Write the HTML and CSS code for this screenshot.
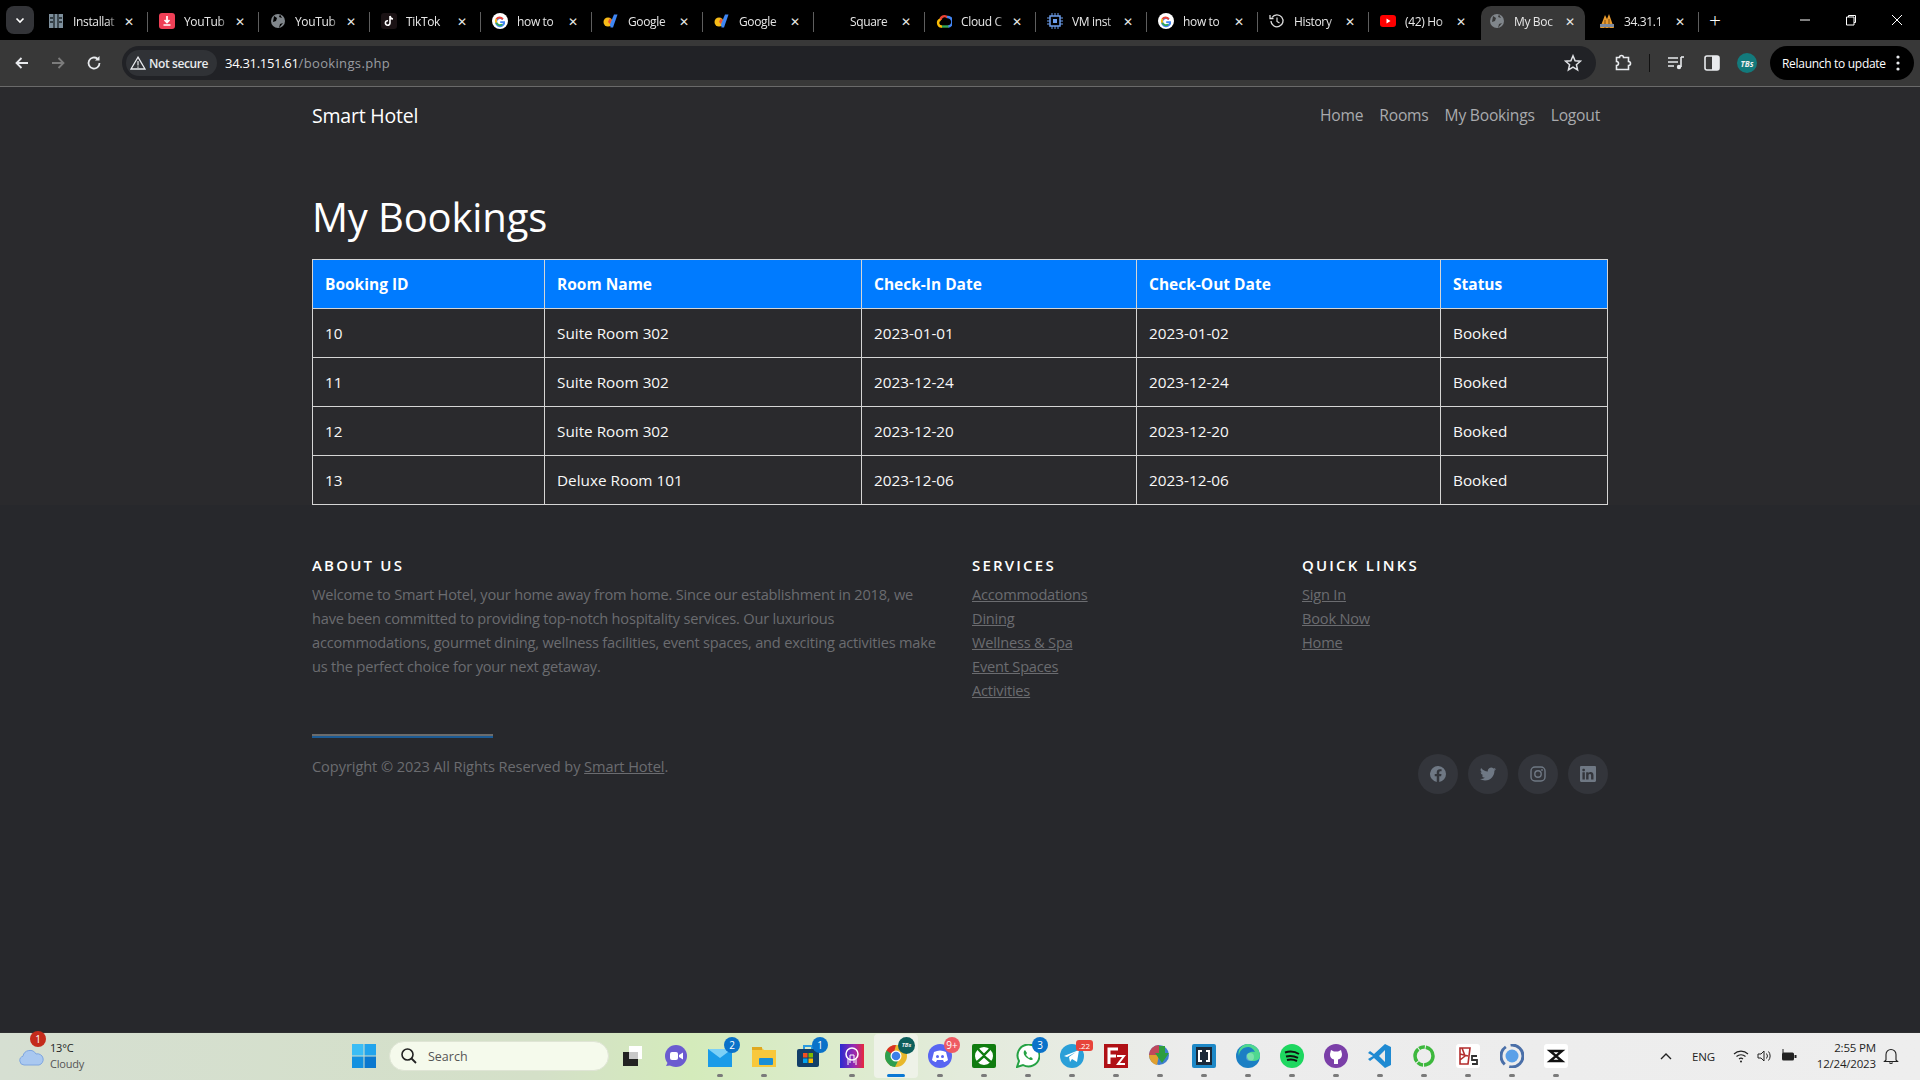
FILE: index.html
```html
<!DOCTYPE html>
<html lang="en">
<head>
<meta charset="utf-8">
<title>My Bookings</title>
<link rel="stylesheet" href="styles.css">
</head>
<body>
<div class="screen">
  <div class="tabstrip">
    <div class="tab-menu"><svg width="12" height="12" viewBox="0 0 12 12"><path d="M2.5 4.5 6 8l3.5-3.5" fill="none" stroke="#fff" stroke-width="1.6"/></svg></div>
    <div class="tabs">
      <div class="tab"><svg class="fav" viewBox="0 0 16 16"><rect x="1" y="1" width="14" height="14" fill="#7d8f9c"/><path d="M6 1v14M10 1v14M2 5h3M2 9h3M11 5h3M11 9h3" stroke="#1d2428" stroke-width="1.3"/></svg><span class="tab-title">Installat</span><span class="tab-x">✕</span></div>
      <div class="tab"><svg class="fav" viewBox="0 0 16 16"><rect width="16" height="16" rx="3" fill="#ef3f56"/><path d="M8 3v6M5.5 7 8 9.5 10.500 7M4.500 12h7" stroke="#fff" stroke-width="1.700" fill="none"/></svg><span class="tab-title">YouTub</span><span class="tab-x">✕</span></div>
      <div class="tab"><svg class="fav" viewBox="0 0 16 16"><circle cx="8" cy="8" r="7" fill="#80868b"/><path d="M4 3l3 2-1 3-3 1M9 15l1-4 3-1M10 1.500 9 4l3 1" fill="#000"/></svg><span class="tab-title">YouTub</span><span class="tab-x">✕</span></div>
      <div class="tab"><svg class="fav" viewBox="0 0 16 16"><rect width="16" height="16" rx="3" fill="#1a1214"/><path d="M9 3v7a2.300 2.300 0 1 1-2-2.300M9 3c.3 1.800 1.300 2.800 3 3" fill="none" stroke="#fff" stroke-width="1.600"/></svg><span class="tab-title">TikTok</span><span class="tab-x">✕</span></div>
      <div class="tab"><svg class="fav" viewBox="0 0 16 16"><use href="#google"/></svg><span class="tab-title">how to</span><span class="tab-x">✕</span></div>
      <div class="tab"><svg class="fav" viewBox="0 0 16 16"><use href="#gemini"/></svg><span class="tab-title">Google</span><span class="tab-x">✕</span></div>
      <div class="tab"><svg class="fav" viewBox="0 0 16 16"><use href="#gemini"/></svg><span class="tab-title">Google</span><span class="tab-x">✕</span></div>
      <div class="tab"><span class="fav"></span><span class="tab-title">Square</span><span class="tab-x">✕</span></div>
      <div class="tab"><svg class="fav" viewBox="0 0 16 16"><path d="M4.500 7a4 4 0 0 1 7-2.500" fill="none" stroke="#ea4335" stroke-width="2.400"/><path d="M11 4A3.800 3.800 0 0 1 12 13.500" fill="none" stroke="#4285f4" stroke-width="2.400"/><path d="M12.500 13.500H5.500" stroke="#34a853" stroke-width="2.400"/><path d="M6 13.500a3.500 3.500 0 0 1-1.500-6.800" fill="none" stroke="#fbbc05" stroke-width="2.400"/></svg><span class="tab-title">Cloud C</span><span class="tab-x">✕</span></div>
      <div class="tab"><svg class="fav" viewBox="0 0 16 16"><rect x="3" y="3" width="10" height="10" fill="none" stroke="#6d9eeb" stroke-width="1.500"/><rect x="6" y="6" width="4" height="4" fill="#6d9eeb"/><path d="M5 0v3M8 0v3M11 0v3M5 13v3M8 13v3M11 13v3M0 5h3M0 8h3M0 11h3M13 5h3M13 8h3M13 11h3" stroke="#6d9eeb"/></svg><span class="tab-title">VM inst</span><span class="tab-x">✕</span></div>
      <div class="tab"><svg class="fav" viewBox="0 0 16 16"><use href="#google"/></svg><span class="tab-title">how to</span><span class="tab-x">✕</span></div>
      <div class="tab"><svg class="fav" viewBox="0 0 16 16"><path d="M3 4.500A6 6 0 1 1 2 8" fill="none" stroke="#ddd" stroke-width="1.300"/><path d="M1 2v3.500h3.500" fill="none" stroke="#ddd" stroke-width="1.300"/><path d="M8 4.500V8.500l2.500 1.500" fill="none" stroke="#ddd" stroke-width="1.200"/></svg><span class="tab-title">History</span><span class="tab-x">✕</span></div>
      <div class="tab tab-last-before"><svg class="fav" viewBox="0 0 16 16"><rect y="2" width="16" height="12" rx="3" fill="#f00"/><path d="M6.500 5.500v5L10.500 8z" fill="#fff"/></svg><span class="tab-title">(42) Ho</span><span class="tab-x">✕</span></div>
      <div class="tab tab-active"><svg class="fav" viewBox="0 0 16 16"><circle cx="8" cy="8" r="7" fill="#80868b"/><path d="M4 3l3 2-1 3-3 1M9 15l1-4 3-1M10 1.500 9 4l3 1" fill="#383838"/></svg><span class="tab-title">My Boc</span><span class="tab-x">✕</span></div>
      <div class="tab"><svg class="fav" viewBox="0 0 16 16"><path d="M1 15 6 2l2 4 2-5 5 14z" fill="#e89a2e"/><path d="M6 15V7M10 15V6" stroke="#7a4a10"/><rect x="1" y="11" width="14" height="3" fill="#7b8aa0"/></svg><span class="tab-title">34.31.1</span><span class="tab-x">✕</span></div>
      <div class="tab-plus">+</div>
    </div>
    <div class="window-controls">
      <svg width="12" height="12" viewBox="0 0 12 12"><path d="M1 6h10" stroke="#fff"/></svg>
      <svg width="12" height="12" viewBox="0 0 12 12"><path d="M3.500 3V1.500h7v7H9M1.500 3h7.500v8h-7.500z" fill="none" stroke="#fff"/></svg>
      <svg width="12" height="12" viewBox="0 0 12 12"><path d="M1 1l10 10M11 1 1 11" stroke="#fff"/></svg>
    </div>
  </div>
  <div class="toolbar">
    <div class="nav-icons">
      <svg width="16" height="16" viewBox="0 0 16 16"><path d="M14 8H3M7.500 3 2.500 8l5 5" fill="none" stroke="#e8eaed" stroke-width="1.800"/></svg>
      <svg width="16" height="16" viewBox="0 0 16 16"><path d="M2 8h11M8.500 3l5 5-5 5" fill="none" stroke="#7c7c7c" stroke-width="1.800"/></svg>
      <svg width="16" height="16" viewBox="0 0 16 16"><path d="M13.500 8A5.500 5.500 0 1 1 11.500 3.800" fill="none" stroke="#e8eaed" stroke-width="1.800"/><path d="M13.500 1v4.500H9z" fill="#e8eaed"/></svg>
    </div>
    <div class="omnibox">
      <div class="secure-chip"><svg width="16" height="14" viewBox="0 0 16 14"><path d="M8 1.200 15 13H1z" fill="none" stroke="#e8eaed" stroke-width="1.300"/><path d="M8 5v4.500M8 10.500v1.300" stroke="#e8eaed" stroke-width="1.200"/></svg><span>Not secure</span></div>
      <div class="url"><span class="url-host">34.31.151.61</span><span class="url-path">/bookings.php</span></div>
      <svg class="star" width="18" height="18" viewBox="0 0 18 18"><path d="M9 1.800 11.100 6.700 16.400 7.200 12.400 10.700 13.600 15.900 9 13.200 4.400 15.900 5.600 10.700 1.600 7.200 6.900 6.700z" fill="none" stroke="#dfe1e5" stroke-width="1.500"/></svg>
    </div>
    <div class="tool-icons">
      <svg width="18" height="18" viewBox="0 0 18 18"><path d="M2.500 3.500h3a2 2 0 0 1 4 0h5v4a2 2 0 0 1 0 4v4h-12v-4a2 2 0 0 0 0-4z" fill="none" stroke="#e8eaed" stroke-width="1.600"/></svg>
      <span class="tool-sep"></span>
      <svg width="18" height="18" viewBox="0 0 18 18"><path d="M1 4h10M1 8h10M1 12h6" stroke="#e8eaed" stroke-width="1.600"/><path d="M14 3v10" stroke="#e8eaed" stroke-width="1.600"/><circle cx="12" cy="13" r="2.200" fill="#e8eaed"/><path d="M14 3h3" stroke="#e8eaed" stroke-width="1.600"/></svg>
      <svg width="18" height="18" viewBox="0 0 18 18"><rect x="2" y="2" width="14" height="14" rx="2" fill="none" stroke="#e8eaed" stroke-width="1.600"/><rect x="9" y="2" width="7" height="14" fill="#e8eaed"/></svg>
      <div class="avatar">TBs</div>
    </div>
    <div class="relaunch"><span>Relaunch to update</span><svg width="4" height="16" viewBox="0 0 4 16"><circle cx="2" cy="2" r="1.600" fill="#e8eaed"/><circle cx="2" cy="8" r="1.600" fill="#e8eaed"/><circle cx="2" cy="14" r="1.600" fill="#e8eaed"/></svg></div>
  </div>

  <div class="page">
    <div class="upper">
      <nav class="site-nav">
        <a class="brand" href="#">Smart Hotel</a>
        <ul class="nav-links">
          <li><a href="#">Home</a></li>
          <li><a href="#">Rooms</a></li>
          <li><a href="#">My Bookings</a></li>
          <li><a href="#">Logout</a></li>
        </ul>
      </nav>
      <main class="content">
        <h1 class="page-title">My Bookings</h1>
        <table class="bookings">
          <thead>
            <tr><th class="c1">Booking ID</th><th class="c2">Room Name</th><th class="c3">Check-In Date</th><th class="c4">Check-Out Date</th><th class="c5">Status</th></tr>
          </thead>
          <tbody>
            <tr><td>10</td><td>Suite Room 302</td><td>2023-01-01</td><td>2023-01-02</td><td>Booked</td></tr>
            <tr><td>11</td><td>Suite Room 302</td><td>2023-12-24</td><td>2023-12-24</td><td>Booked</td></tr>
            <tr><td>12</td><td>Suite Room 302</td><td>2023-12-20</td><td>2023-12-20</td><td>Booked</td></tr>
            <tr><td>13</td><td>Deluxe Room 101</td><td>2023-12-06</td><td>2023-12-06</td><td>Booked</td></tr>
          </tbody>
        </table>
      </main>
    </div>
    <footer class="site-footer">
      <div class="footer-inner">
        <div class="footer-cols">
          <section class="fcol-about">
            <h6 class="footer-head">About Us</h6>
            <p class="footer-text">Welcome to Smart Hotel, your home away from home. Since our establishment in 2018, we have been committed to providing top-notch hospitality services. Our luxurious accommodations, gourmet dining, wellness facilities, event spaces, and exciting activities make us the perfect choice for your next getaway.</p>
          </section>
          <section class="fcol">
            <h6 class="footer-head">Services</h6>
            <ul class="footer-links">
              <li><a href="#">Accommodations</a></li>
              <li><a href="#">Dining</a></li>
              <li><a href="#">Wellness &amp; Spa</a></li>
              <li><a href="#">Event Spaces</a></li>
              <li><a href="#">Activities</a></li>
            </ul>
          </section>
          <section class="fcol">
            <h6 class="footer-head">Quick Links</h6>
            <ul class="footer-links">
              <li><a href="#">Sign In</a></li>
              <li><a href="#">Book Now</a></li>
              <li><a href="#">Home</a></li>
            </ul>
          </section>
        </div>
        <hr class="footer-rule">
        <div class="footer-bottom">
          <p class="copyright">Copyright © 2023 All Rights Reserved by <a href="#">Smart Hotel</a>.</p>
          <div class="socials">
            <a class="social" href="#"><svg width="16" height="16" viewBox="0 0 16 16"><path d="M16 8a8 8 0 1 0-9.250 7.900v-5.590H4.720V8h2.030V6.240c0-2 1.190-3.110 3.020-3.110.87 0 1.790.15 1.790.15v1.970h-1.010c-.99 0-1.300.62-1.300 1.250V8h2.220l-.35 2.310H9.250v5.590A8 8 0 0 0 16 8z"/></svg></a>
            <a class="social" href="#"><svg width="16" height="16" viewBox="0 0 16 16"><path d="M5.030 14.500c6.040 0 9.340-5 9.340-9.340 0-.14 0-.28-.01-.42A6.700 6.700 0 0 0 16 3.040a6.500 6.500 0 0 1-1.890.52 3.300 3.300 0 0 0 1.450-1.820 6.600 6.600 0 0 1-2.090.8A3.290 3.290 0 0 0 7.880 5.530 9.320 9.320 0 0 1 1.110 2.100a3.290 3.290 0 0 0 1.020 4.380A3.300 3.300 0 0 1 .64 6.080v.04a3.290 3.290 0 0 0 2.630 3.220 3.300 3.300 0 0 1-1.480.06 3.290 3.290 0 0 0 3.070 2.280A6.600 6.600 0 0 1 0 13.040a9.300 9.300 0 0 0 5.030 1.460z"/></svg></a>
            <a class="social" href="#"><svg width="16" height="16" viewBox="0 0 16 16"><rect x="1" y="1" width="14" height="14" rx="4" fill="none" stroke="currentColor" stroke-width="1.400"/><circle cx="8" cy="8" r="3.200" fill="none" stroke="currentColor" stroke-width="1.400"/><circle cx="12" cy="4" r=".9"/></svg></a>
            <a class="social" href="#"><svg width="16" height="16" viewBox="0 0 16 16"><path d="M0 1.150C0 .52.520 0 1.170 0h13.660C15.480 0 16 .52 16 1.150v13.700c0 .63-.52 1.150-1.170 1.150H1.170C.52 16 0 15.480 0 14.850zM4.830 13.400V6.180h-2.400v7.220zM3.630 5.200c.84 0 1.360-.55 1.360-1.250-.02-.71-.52-1.250-1.340-1.250-.82 0-1.360.54-1.360 1.250 0 .7.520 1.250 1.320 1.250zM8.550 13.400V9.370c0-.22.020-.43.080-.59.170-.43.570-.88 1.230-.88.870 0 1.220.66 1.220 1.630v3.870h2.400V9.260c0-2.220-1.180-3.250-2.760-3.250-1.280 0-1.850.7-2.170 1.190V6.180h-2.400c.03.680 0 7.220 0 7.220z"/></svg></a>
          </div>
        </div>
      </div>
    </footer>
  </div>

  <div class="taskbar">
    <div class="weather">
      <svg class="weather-icon" width="26" height="20" viewBox="0 0 26 20"><path d="M5 19a4.500 4.500 0 0 1-1-8.800A7 7 0 0 1 17 8a5.500 5.500 0 0 1 3 11z" fill="#a9c8f0" stroke="#7ea6e0"/></svg>
      <span class="weather-badge">1</span>
      <div class="weather-text"><span>13°C</span><span class="weather-sub">Cloudy</span></div>
    </div>
    <div class="task-center">
      <svg class="task-icon" width="24" height="24" viewBox="0 0 24 24"><rect width="11.500" height="11.500" fill="#3cbdf5"/><rect x="12.500" width="11.500" height="11.500" fill="#22a4ec"/><rect y="12.500" width="11.500" height="11.500" fill="#1391e0"/><rect x="12.500" y="12.500" width="11.500" height="11.500" fill="#0a78cf"/></svg>
      <div class="search"><svg width="18" height="18" viewBox="0 0 18 18"><circle cx="7.500" cy="7.500" r="5.500" fill="none" stroke="#222" stroke-width="1.600"/><path d="M11.500 11.500 16 16" stroke="#222" stroke-width="1.800"/></svg><span>Search</span></div>
      <span class="ti"><svg viewBox="0 0 24 24"><rect x="3" y="8" width="15" height="14" fill="#222"/><rect x="9" y="2" width="13" height="13" fill="#fff"/><rect x="9" y="8" width="9" height="7" fill="#c8c8c8"/></svg></span>
      <span class="ti"><svg viewBox="0 0 24 24"><circle cx="12" cy="12" r="11" fill="#6b5bd0"/><path d="M2 22l3-6 5 5z" fill="#6b5bd0"/><rect x="6" y="8" width="8" height="8" rx="2" fill="#fff"/><path d="M15 11l4-2.500v7L15 13z" fill="#fff"/></svg></span>
      <span class="ti"><svg viewBox="0 0 24 24"><rect x="0" y="5" width="24" height="18" fill="#1a9be8"/><path d="M0 5l12 9 12-9" fill="#7cd0f7"/></svg><b class="badge">2</b></span>
      <span class="ti"><svg viewBox="0 0 24 24"><path d="M0 3h9l3 3h12v17H0z" fill="#f8c83c"/><rect x="7" y="14" width="14" height="7" rx="1" fill="#1a8fd6"/><rect y="3" width="10" height="3" fill="#e0a820"/></svg></span>
      <span class="ti"><svg viewBox="0 0 24 24"><rect x="1" y="5" width="22" height="18" rx="2" fill="#123f69"/><path d="M8 5V2h8v3" fill="none" stroke="#2c9be0" stroke-width="2"/><rect x="7" y="9" width="4.500" height="4.500" fill="#f25022"/><rect x="12.500" y="9" width="4.500" height="4.500" fill="#7fba00"/><rect x="7" y="14.500" width="4.500" height="4.500" fill="#00a4ef"/><rect x="12.500" y="14.500" width="4.500" height="4.500" fill="#ffb900"/></svg><b class="badge">1</b></span>
      <span class="ti"><svg viewBox="0 0 24 24"><defs><linearGradient id="pg" x1="0" x2="1"><stop offset="0" stop-color="#2a2ad0"/><stop offset=".6" stop-color="#9a2ab0"/><stop offset="1" stop-color="#e8283c"/></linearGradient></defs><rect width="24" height="24" fill="url(#pg)"/><circle cx="12" cy="10" r="6" fill="none" stroke="#fff" stroke-width="1.500"/><path d="M8 21v-6M16 21v-6M10 19V11h4v8" fill="none" stroke="#fff"/></svg></span>
      <span class="ti ti-active"><svg viewBox="0 0 24 24"><circle cx="12" cy="12" r="11" fill="#e8b82c"/><path d="M12 1a11 11 0 0 0-9.500 5.500L8 15z" fill="#d93025"/><path d="M2.500 6.500A11 11 0 0 0 11 23l4-8z" fill="#2e9e4f"/><circle cx="12" cy="12" r="5.500" fill="#fff"/><circle cx="12" cy="12" r="4.300" fill="#3d7fe8"/></svg><span class="profile-badge">TBs</span></span>
      <span class="ti"><svg viewBox="0 0 24 24"><circle cx="12" cy="12" r="12" fill="#5865f2"/><path d="M6 8c4-2 8-2 12 0l2 8c-2 1.500-3 2-4 2l-1-2H9l-1 2c-1 0-2-.5-4-2z" fill="#fff"/><circle cx="9.500" cy="12.500" r="1.500" fill="#5865f2"/><circle cx="14.500" cy="12.500" r="1.500" fill="#5865f2"/></svg><b class="badge badge-red">9+</b></span>
      <span class="ti"><svg viewBox="0 0 24 24"><rect width="24" height="24" rx="2" fill="#107c10"/><circle cx="12" cy="12" r="9" fill="#fff"/><path d="M5 4l7 7 7-7M3 20l9-8 9 8" fill="none" stroke="#107c10" stroke-width="2.400"/></svg></span>
      <span class="ti"><svg viewBox="0 0 24 24"><path d="M1 23l2-6A11 11 0 1 1 7 21z" fill="#fff" stroke="#25a244" stroke-width="2"/><path d="M8 7c-1 2 0 5 3 7s5 3 6 1l-2-2-2 1-3-3 1-2-2-3z" fill="#25a244"/></svg><b class="badge">3</b></span>
      <span class="ti"><svg viewBox="0 0 24 24"><circle cx="12" cy="12" r="12" fill="#2a9fd8"/><path d="M4 12 19 6l-2 12-5-3-2 3-1-5 7-5-9 5z" fill="#fff"/></svg><b class="badge badge-rect">.22</b></span>
      <span class="ti"><svg viewBox="0 0 24 24"><rect width="24" height="24" fill="#b01116"/><path d="M5 20V5h9M5 12h7" fill="none" stroke="#fff" stroke-width="3"/><path d="M13 12h7l-6 8h7" fill="none" stroke="#fff" stroke-width="2"/></svg></span>
      <span class="ti"><svg viewBox="0 0 24 24"><circle cx="11" cy="11" r="10" fill="#3f7fd0"/><path d="M1 11a10 10 0 0 1 10-10v10z" fill="#c0485c"/><path d="M1 11a10 10 0 0 0 8 10l2-10z" fill="#e0a030"/><path d="M11 2h6v7h4l-7 10-7-10h4z" fill="#2e9e3f"/></svg></span>
      <span class="ti"><svg viewBox="0 0 24 24"><rect width="24" height="24" rx="2" fill="#1e88c7"/><rect x="4" y="3" width="16" height="18" fill="#1b2a3a"/><path d="M10 7H7v10h3M14 7h3v10h-3" fill="none" stroke="#fff" stroke-width="2"/></svg></span>
      <span class="ti"><svg viewBox="0 0 24 24"><circle cx="12" cy="12" r="12" fill="#1b7fc4"/><path d="M12 0a12 12 0 0 1 12 12c0 4-4 5-7 5-5 0-6-3-6-5 0-3 4-5 8-4C17 4 14 3 12 3 7 3 3 7 3 12 1 6 6 0 12 0z" fill="#4fd88f"/><circle cx="14" cy="13" r="4" fill="#fff" opacity=".25"/></svg></span>
      <span class="ti"><svg viewBox="0 0 24 24"><circle cx="12" cy="12" r="12" fill="#1ed760"/><path d="M5 8.500c5-1.500 10-1 14 1.500M6 12.500c4-1 8-.6 12 1.400M7 16c3-.8 7-.5 10 1" fill="none" stroke="#111" stroke-width="2"/></svg></span>
      <span class="ti"><svg viewBox="0 0 24 24"><circle cx="12" cy="12" r="12" fill="#7b3fa8"/><path d="M6 10l1-4 3 1.500h4L17 6l1 4c0 4-2 5-4 5.500V20h-4v-4.500C8 15 6 14 6 10z" fill="#fff"/></svg></span>
      <span class="ti"><svg viewBox="0 0 24 24"><path d="M17 0l6 3v18l-6 3L6 14l-4 3-2-2 5-3-5-3 2-2 4 3z" fill="#1f8ad2"/><path d="M17 6v12l-6-6z" fill="#e9e9e9"/></svg></span>
      <span class="ti"><svg viewBox="0 0 24 24"><circle cx="12" cy="12" r="9" fill="none" stroke="#3db83d" stroke-width="3.500" stroke-dasharray="14 1 6 1"/></svg></span>
      <span class="ti"><svg viewBox="0 0 24 24"><rect width="24" height="24" rx="3" fill="#fff"/><path d="M4 4h10l-2 16H4zM4 10l8 2M6 4l3 8-5 4" fill="none" stroke="#b32d2d" stroke-width="1.600"/><path d="M21 12h-5v4h5v4h-5" fill="none" stroke="#333" stroke-width="1.800"/></svg></span>
      <span class="ti"><svg viewBox="0 0 24 24"><circle cx="12" cy="12" r="11" fill="none" stroke="#4a6fa8" stroke-width="3" stroke-dasharray="20 5"/><circle cx="12" cy="12" r="6.500" fill="#5aa0e8"/></svg></span>
      <span class="ti"><svg viewBox="0 0 24 24"><rect width="24" height="24" rx="3" fill="#fff"/><path d="M6 7h12l-12 10h12z" fill="none" stroke="#111" stroke-width="2.400"/></svg></span>
    </div>
    <div class="tray">
      <svg width="12" height="8" viewBox="0 0 12 8"><path d="M1 7l5-5 5 5" fill="none" stroke="#222" stroke-width="1.400"/></svg>
      <span class="lang">ENG</span>
      <svg class="tray-icon" width="16" height="14" viewBox="0 0 16 14"><path d="M1 5a10 10 0 0 1 14 0M3.500 7.500a6.500 6.500 0 0 1 9 0M6 10a3 3 0 0 1 4 0" fill="none" stroke="#222" stroke-width="1.100"/><circle cx="8" cy="12.500" r="1" fill="#222"/></svg>
      <svg class="tray-icon" width="16" height="14" viewBox="0 0 16 14"><path d="M1 5h3l3-3v10L4 9H1z" fill="none" stroke="#222"/><path d="M9.500 4.500a4 4 0 0 1 0 5M11.500 2.500a7 7 0 0 1 0 9" fill="none" stroke="#222"/></svg>
      <svg class="tray-icon" width="16" height="14" viewBox="0 0 16 14"><rect x="1" y="3.500" width="12" height="8" rx="1.500" fill="#222"/><rect x="13.500" y="6" width="2" height="3" fill="#222"/><path d="M2 0v4" stroke="#222"/></svg>
      <div class="clock"><span>2:55 PM</span><span>12/24/2023</span></div>
      <svg width="16" height="18" viewBox="0 0 16 18"><path d="M3 13V7.500a5 5 0 0 1 10 0V13l1.500 1.500h-13zM6.500 15.500a1.600 1.600 0 0 0 3 0" fill="none" stroke="#222" stroke-width="1.100"/></svg>
    </div>
  </div>
</div>
<svg class="defs" width="0" height="0">
  <defs>
    <g id="google"><circle cx="8" cy="8" r="8" fill="#fff"/><path d="M13 8.200H8.200v1.800h2.800a3 3 0 1 1-.8-3.100l1.300-1.300A5 5 0 1 0 13 8.200z" fill="#4285f4"/><path d="M3.600 5.500 5.200 6.700A3 3 0 0 1 10.200 6.900l1.300-1.300A5 5 0 0 0 3.600 5.500z" fill="#ea4335"/><path d="M3.600 5.500a5 5 0 0 0 0 5l1.500-1.200a3 3 0 0 1 0-2.700z" fill="#fbbc05"/><path d="M3.600 10.500A5 5 0 0 0 11 12l-1.500-1.200a3 3 0 0 1-4.400-1.500z" fill="#34a853"/></g>
    <g id="gemini"><circle cx="5" cy="9" r="4.500" fill="#f6bb18"/><path d="M7 11 11 1.500h3.500L10 14.500H7.500z" fill="#3f86f4"/><path d="M6.500 5.500 8.600 7 7 11 5 9z" fill="#e8503a"/></g>
  </defs>
</svg>
</body>
</html>
```
FILE: styles.css
```css
* { box-sizing: border-box; }
html, body { margin: 0; padding: 0; height: 100%; }
body { font-family: "Open Sans", "Noto Sans", "Liberation Sans", sans-serif; background: #27282c; overflow: hidden; }
a { color: inherit; }
ul { list-style: none; margin: 0; padding: 0; }
.defs { position: absolute; }
.screen { height: 1080px; display: flex; flex-direction: column; }

/* browser chrome */
.tabstrip { height: 40px; background: #000; display: flex; align-items: flex-end; flex: none; }
.tab-menu { width: 28px; height: 28px; margin: 0 3px 6px 6px; background: #333438; border-radius: 8px; display: flex; align-items: center; justify-content: center; flex: none; }
.tabs { display: flex; align-items: flex-end; flex: none; }
.tab { width: 111px; height: 34px; display: flex; align-items: center; padding: 0 0 4px 11px; color: #e8e8e8; font-size: 12px; position: relative; flex: none; }
.tab::after { content: ""; position: absolute; right: 0; top: 6px; width: 1px; height: 20px; background: #5e5e5e; }
.tab-last-before::after { display: none; }
.tab-active { background: #383838; border-radius: 10px 10px 0 0; width: 104px; padding-left: 8px; margin-left: 1px; margin-right: 3px; }
.tab-active::after { display: none; }
.fav { width: 16px; height: 16px; flex: none; display: block; }
.tab-title { width: 46px; margin-left: 9px; overflow: hidden; white-space: nowrap; letter-spacing: -.35px; -webkit-mask-image: linear-gradient(90deg, #000 75%, transparent); mask-image: linear-gradient(90deg, #000 75%, transparent); }
.tab-x { margin-left: 3px; font-size: 12px; color: #e8e8e8; width: 14px; text-align: center; }
.tab-plus { color: #fff; font-size: 21px; height: 34px; line-height: 28px; padding-left: 10px; font-weight: 300; }
.window-controls { margin: 0 17px 14px auto; display: flex; gap: 34px; }
.toolbar { height: 47px; flex: none; background: #383838; border-bottom: 1px solid #6a6a6a; display: flex; align-items: flex-start; padding-top: 6px; }
.nav-icons { width: 122px; height: 34px; display: flex; align-items: center; gap: 20px; padding-left: 14px; flex: none; }
.omnibox { width: 1474px; height: 34px; background: #212226; border-radius: 17px; display: flex; align-items: center; padding: 0 14px 0 4px; flex: none; color: #e8eaed; }
.secure-chip { height: 26px; width: 91px; background: #303236; border-radius: 13px; display: flex; align-items: center; gap: 3px; padding-left: 4px; font-size: 12px; font-weight: 600; letter-spacing: -.4px; flex: none; }
.url { margin-left: 8px; font-size: 13px; flex: 1; }
.url-host { color: #fff; letter-spacing: -.3px; font-weight: 500; }
.url-path { color: #9a9da1; letter-spacing: .35px; }
.star { flex: none; }
.tool-icons { width: 170px; height: 34px; display: flex; align-items: center; padding-left: 18px; gap: 18px; flex: none; }
.tool-sep { width: 1px; height: 18px; background: #111; margin: 0 -1px; }
.avatar { width: 20px; height: 20px; margin-left: -2px; border-radius: 50%; background: #137a7c; color: #eee; font-size: 8px; font-style: italic; font-weight: 700; display: flex; align-items: center; justify-content: center; flex: none; }
.relaunch { margin-left: 4px; width: 144px; height: 34px; background: #000; border-radius: 17px; color: #fff; font-size: 12px; letter-spacing: -.3px; display: flex; align-items: center; gap: 10px; padding-left: 12px; flex: none; }

/* page */
.page { flex: 1; min-height: 0; display: flex; flex-direction: column; }
.upper { background: #2a2a2d; flex: none; }
.site-nav { width: 1296px; margin: 0 auto; height: 56px; display: flex; align-items: center; justify-content: space-between; padding-right: 8px; }
.brand { color: #fff; font-size: 19.500px; text-decoration: none; letter-spacing: -.2px; }
.nav-links { display: flex; gap: 16px; }
.nav-links a { color: #a9aaad; font-size: 15.600px; text-decoration: none; letter-spacing: -.2px; }
.content { width: 1296px; margin: 0 auto; }
.page-title { color: #fff; font-size: 40px; font-weight: 500; line-height: 48px; margin: 50px 0 0; height: 66px; letter-spacing: -.15px; }
.bookings { width: 1295px; border-collapse: collapse; table-layout: fixed; color: #f8f8f8; font-size: 15.300px; }
.bookings th, .bookings td { border: 1px solid #d5d5d5; height: 49px; padding: 0 12px; text-align: left; }
.bookings th { background: #007bff; color: #fff; font-weight: 700; font-size: 15.500px; }
.bookings td { background: #2a2a2d; }
.c1 { width: 232px; } .c2 { width: 317px; } .c3 { width: 275px; } .c4 { width: 304px; } .c5 { width: 167px; }

.site-footer { flex: 1; padding-top: 50px; }
.footer-inner { width: 1296px; margin: 0 auto; }
.footer-cols { display: grid; grid-template-columns: 660px 330px 306px; height: 174px; }
.fcol-about { padding-right: 30px; }
.footer-head { margin: 0; color: #fff; font-size: 15px; font-weight: 600; line-height: 20px; letter-spacing: 2.200px; text-transform: uppercase; }
.footer-text { margin: 7px 0 0; font-size: 14.600px; line-height: 24px; color: #6b6c70; letter-spacing: -.2px; }
.footer-links { margin-top: 7px; }
.footer-links li { height: 24px; line-height: 24px; font-size: 14.600px; color: #6b6c70; letter-spacing: -.2px; }
.footer-rule { width: 181px; height: 4px; margin: 5px 0 0; border: 0; background: linear-gradient(#6b6b6b 50%, #1c5b94 50%); }
.footer-bottom { display: flex; justify-content: space-between; align-items: flex-start; margin-top: 16px; }
.copyright { margin: 0; font-size: 14.600px; line-height: 24px; color: #6b6c70; letter-spacing: -.08px; }
.socials { display: flex; gap: 10px; }
.social { width: 40px; height: 40px; border-radius: 50%; background: #33353b; color: #6f7884; display: flex; align-items: center; justify-content: center; }
.social svg { fill: currentColor; }

/* taskbar */
.taskbar { height: 48px; flex: none; background: linear-gradient(90deg, #d6dfd2 0, #d4e0c8 28%, #d4ebbb 36%, #e3ebdb 50%, #ececec 62%, #eeeeee 100%); border-top: 1px solid #2e2f31; display: flex; align-items: center; padding-bottom: 1px; color: #1f1f1f; }
.weather { width: 344px; display: flex; align-items: center; padding-left: 19px; position: relative; flex: none; }
.weather-badge { position: absolute; left: 30px; top: -9px; width: 16px; height: 16px; border-radius: 50%; background: #c42b1c; color: #fff; font-size: 10px; text-align: center; line-height: 16px; }
.weather-text { display: flex; flex-direction: column; margin-left: 5px; font-size: 11px; line-height: 16px; letter-spacing: -.2px; }
.weather-sub { color: #555; }
.task-center { display: flex; align-items: center; flex: none; }
.task-icon { flex: none; margin-left: 8px; }
.search { width: 220px; height: 30px; margin-left: 13px; background: #f5faec; border-radius: 15px; border: 1px solid #dfe5d5; display: flex; align-items: center; gap: 10px; padding-left: 10px; font-size: 12.500px; color: #555; flex: none; }
.ti { width: 44px; height: 44px; position: relative; display: flex; align-items: center; justify-content: center; flex: none; }
.ti:nth-of-type(1) { margin-left: 1px; }
.ti svg { width: 24px; height: 24px; display: block; }
.ti::after { content: ""; position: absolute; left: 19px; bottom: 1px; width: 6px; height: 3px; border-radius: 2px; background: #7a7a7a; }
.ti:nth-of-type(1)::after, .ti:nth-of-type(2)::after, .ti:nth-of-type(5)::after { display: none; }
.ti-active { background: #eef2e8; border-radius: 4px; }
.ti-active::after { left: 13px; width: 18px; background: #0a78d4; }
.badge { position: absolute; right: 2px; top: 3px; width: 16px; height: 16px; border-radius: 50%; background: #0a72c9; color: #fff; font-size: 10px; font-weight: 400; line-height: 16px; text-align: center; }
.badge-red { background: #ee5a63; }
.badge-rect { background: #e8443a; border-radius: 3px; width: 17px; height: 11px; line-height: 11px; font-size: 8px; top: 6px; right: 1px; }
.profile-badge { position: absolute; right: 3px; top: 3px; width: 17px; height: 17px; border-radius: 50%; background: #0d5f5c; color: #eee; font-size: 6px; font-style: italic; font-weight: 700; line-height: 17px; text-align: center; }
.tray { margin-left: auto; width: 268px; display: flex; align-items: center; font-size: 11.500px; padding-left: 8px; flex: none; }
.lang { margin: 0 18px 0 20px; letter-spacing: -.2px; }
.tray-icon { margin-right: 8px; }
.clock { display: flex; flex-direction: column; align-items: flex-end; width: 66px; line-height: 16px; margin: 0 7px 0 5px; letter-spacing: -.2px; }
```
